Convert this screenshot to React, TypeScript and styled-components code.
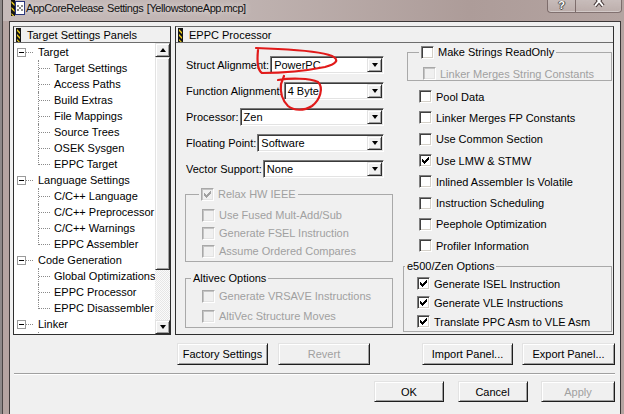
import React from 'react';
import styled, { createGlobalStyle } from 'styled-components';

const GlobalStyle = createGlobalStyle`
  html, body {
    margin: 0;
    padding: 0;
    background: #f0f0f0;
  }
  body {
    font-family: 'Liberation Sans', Arial, sans-serif;
    font-size: 11px;
    color: #000;
  }
  * {
    box-sizing: border-box;
  }
`;

const Window = styled.div`
  position: relative;
  width: 624px;
  height: 414px;
  overflow: hidden;
  display: flex;
  flex-direction: column;
  background: #b5a4a1;
  box-shadow: inset 2px 0 0 #8e8989, inset 3px 0 0 #4a4444;
`;

const TitleBar = styled.div`
  height: 21px;
  margin-left: 3px;
  display: grid;
  grid-template-columns: 8px 14px auto 1fr auto;
  align-items: start;
  background: linear-gradient(to right, #c5bab9 0%, #c1b5b3 35%, #ad9c99 75%, #b4a4a1 100%);
`;

const IconSlot = styled.div`
  grid-column: 2;
  width: 14px;
  height: 16px;
  display: flex;
`;

const Title = styled.div`
  grid-column: 3;
  margin-left: 1px;
  margin-top: 1px;
  font-size: 11px;
  letter-spacing: -0.45px;
  word-spacing: 1px;
  line-height: 15px;
  color: #111;
  text-shadow: 0 0 6px rgba(255, 255, 255, 0.8);
  white-space: nowrap;
`;

const CaptionButtons = styled.div`
  grid-column: 5;
  margin-right: 2px;
  margin-top: -1px;
  display: flex;
`;

const CaptionButton = styled.div<{ $w: number; $side: 'left' | 'right' }>`
  width: ${p => p.$w}px;
  height: 14px;
  display: flex;
  justify-content: center;
  overflow: hidden;
  border: 1px solid rgba(70, 50, 50, 0.55);
  border-top: none;
  ${p => (p.$side === 'left' ? 'border-right: none;' : '')}
  border-radius: ${p => (p.$side === 'left' ? '0 0 0 4px' : '0 0 4px 0')};
  background: linear-gradient(to bottom, rgba(255, 255, 255, 0.3), rgba(255, 255, 255, 0.12));
  box-shadow: inset 0 -1px 0 rgba(255, 255, 255, 0.35);
`;

const HelpGlyph = styled.span`
  font-family: 'Liberation Sans', Arial, sans-serif;
  font-weight: bold;
  font-size: 11px;
  line-height: 12px;
  color: #fff;
  text-shadow: 0 0 1px #333, 1px 0 0 #555, -1px 0 0 #555, 0 1px 0 #555;
`;

const Client = styled.div`
  flex: 1;
  margin: 0 3px 0 9px;
  background: #f0f0f0;
  border: 1px solid #3d3838;
  border-bottom: none;
  padding: 4px 6px 0 3px;
  display: flex;
  flex-direction: column;
`;

const Main = styled.div`
  display: flex;
  gap: 4px;
  height: 309px;
`;

const Panel = styled.div<{ $w?: number }>`
  ${p => (p.$w ? `width: ${p.$w}px;` : 'flex: 1;')}
  display: flex;
  flex-direction: column;
  border: 1px solid #2f2f2f;
  border-top-color: #6a6a6a;
`;

const PanelHeader = styled.div`
  height: 16px;
  flex: none;
  display: flex;
  align-items: center;
  gap: 6px;
  padding-left: 2px;
  border-bottom: 1px solid #6d6d6d;
  background: #f0f0f0;
  white-space: nowrap;
`;

const TreeBody = styled.div`
  flex: 1;
  display: flex;
  background: #fff;
  overflow: hidden;
`;

const TreeList = styled.div`
  flex: 1;
  padding-top: 1px;
  overflow: hidden;
`;

const TreeRow = styled.div<{ $child?: boolean; $last?: boolean }>`
  position: relative;
  height: 16px;
  line-height: 16px;
  padding-left: ${p => (p.$child ? 40 : 24)}px;
  white-space: nowrap;

  &::before {
    content: '';
    position: absolute;
    left: ${p => (p.$child ? 24 : 12)}px;
    top: ${p => (p.$child ? '0' : '8px')};
    width: ${p => (p.$child ? 0 : 7)}px;
    height: ${p => (p.$child ? (p.$last ? '9px' : '16px') : '0')};
    border-left: ${p => (p.$child ? '1px dotted #8a8a8a' : 'none')};
    border-top: ${p => (p.$child ? 'none' : '1px dotted #8a8a8a')};
  }

  &::after {
    content: '';
    display: ${p => (p.$child ? 'block' : 'none')};
    position: absolute;
    left: 25px;
    top: 8px;
    width: 11px;
    border-top: 1px dotted #8a8a8a;
  }
`;

const Expander = styled.span`
  position: absolute;
  left: 3px;
  top: 4px;
  width: 9px;
  height: 9px;
  border: 1px solid #9a9a9a;
  background: #fff;

  &::after {
    content: '';
    position: absolute;
    left: 1px;
    top: 3px;
    width: 5px;
    height: 1px;
    background: #000;
  }
`;

const ScrollBar = styled.div`
  width: 15px;
  flex: none;
  display: flex;
  flex-direction: column;
  background: repeating-conic-gradient(#fbfbfb 0 25%, #e6e6e6 0 50%) 0 0 / 2px 2px;
`;

const Raised = styled.div<{ $h?: number }>`
  ${p => (p.$h ? `height: ${p.$h}px; flex: none;` : '')}
  display: flex;
  align-items: center;
  justify-content: center;
  background: #f0f0f0;
  border: 1px solid;
  border-color: #e3e3e3 #2c2c2c #2c2c2c #e3e3e3;
  box-shadow: inset 1px 1px 0 #fff, inset -1px -1px 0 #a0a0a0;
`;

const Track = styled.div`
  flex: 1;
`;

const Arrow = styled.span<{ $dir: 'up' | 'down' }>`
  width: 0;
  height: 0;
  border-left: 3.5px solid transparent;
  border-right: 3.5px solid transparent;
  ${p =>
    p.$dir === 'up' ? 'border-bottom: 4px solid #000;' : 'border-top: 4px solid #000;'}
`;

const SettingsBody = styled.div`
  flex: 1;
  display: grid;
  grid-template-columns: 208px 209px;
  column-gap: 10px;
  padding-left: 9px;
`;

const Column = styled.div<{ $top: number }>`
  display: flex;
  flex-direction: column;
  padding-top: ${p => p.$top}px;
`;

const Fields = styled.div`
  display: flex;
  flex-direction: column;
  gap: 8px;
`;

const FieldRow = styled.div`
  display: flex;
  align-items: center;
  height: 18px;
  width: 199px;
  padding-left: 1px;
`;

const FieldLabel = styled.span`
  white-space: nowrap;
  margin-right: 1px;
`;

const Select = styled.div`
  flex: 1;
  height: 18px;
  display: flex;
  align-items: center;
  padding: 1px;
  background: #fff;
  border: 1px solid;
  border-color: #7a7a7a #fff #fff #7a7a7a;
  box-shadow: inset 1px 1px 0 #3a3a3a, inset -1px -1px 0 #e3e3e3;
`;

const SelectText = styled.span`
  flex: 1;
  padding-left: 2px;
  white-space: nowrap;
`;

const DropButton = styled(Raised)`
  width: 15px;
  height: 14px;
  flex: none;
`;

const Group = styled.fieldset<{ $mt: number; $ml?: number; $pt: number; $pb: number }>`
  margin: ${p => p.$mt}px 0 0 ${p => p.$ml ?? 0}px;
  padding: ${p => p.$pt}px 0 ${p => p.$pb}px 0;
  min-width: 0;
  border: 1px solid #a9a9a9;
`;

const Legend = styled.legend<{ $ml: number; $disabled?: boolean }>`
  margin-left: ${p => p.$ml}px;
  padding: 0 2px;
  height: 14px;
  display: flex;
  align-items: center;
  gap: 4px;
  line-height: 14px;
  color: ${p => (p.$disabled ? '#a0a0a0' : '#000')};
  white-space: nowrap;
`;

const CheckRow = styled.div<{ $h: number; $indent: number; $disabled?: boolean }>`
  height: ${p => p.$h}px;
  display: flex;
  align-items: center;
  gap: 4px;
  padding-left: ${p => p.$indent}px;
  color: ${p => (p.$disabled ? '#a0a0a0' : '#000')};
  white-space: nowrap;
`;

const Box = styled.span<{ $disabled?: boolean }>`
  width: 13px;
  height: 13px;
  flex: none;
  display: flex;
  align-items: center;
  justify-content: center;
  border: 1px solid;
  border-color: ${p => (p.$disabled ? '#a8a8a8 #fff #fff #a8a8a8' : '#808080 #fff #fff #808080')};
  box-shadow: ${p =>
    p.$disabled
      ? 'inset 1px 1px 0 #c4c4c4, inset -1px -1px 0 #e3e3e3'
      : 'inset 1px 1px 0 #404040, inset -1px -1px 0 #d4d0c8'};
  background: ${p => (p.$disabled ? '#f0f0f0' : '#fff')};
`;

const CheckList = styled.div<{ $mt: number }>`
  margin-top: ${p => p.$mt}px;
  display: flex;
  flex-direction: column;
`;

const ButtonRow = styled.div`
  margin-top: 8px;
  margin-right: -1px;
  padding-left: 164px;
  display: flex;
  gap: 10px;
`;

const Spacer = styled.div`
  flex: 1;
`;

const Separator = styled.div`
  margin: 8px -1px 0 1px;
  height: 2px;
  border-top: 1px solid #a0a0a0;
  border-bottom: 1px solid #fff;
`;

const DialogRow = styled.div`
  margin-top: 6px;
  margin-right: -1px;
  display: flex;
  justify-content: flex-end;
  gap: 13.5px;
`;

const Button = styled.button<{ $w: number; $h: number }>`
  width: ${p => p.$w}px;
  height: ${p => p.$h}px;
  padding: 0;
  font-family: 'Liberation Sans', Arial, sans-serif;
  font-size: 11px;
  color: ${p => (p.disabled ? '#a0a0a0' : '#000')};
  background: #f0f0f0;
  border: 1px solid;
  border-color: #e3e3e3 #1e1e1e #1e1e1e #e3e3e3;
  box-shadow: inset 1px 1px 0 #fff, inset -1px -1px 0 #a0a0a0;
`;

const Annotations = styled.svg`
  position: absolute;
  left: 0;
  top: 0;
  pointer-events: none;
`;

const StripeIcon = () => (
  <svg width="5" height="14" viewBox="0 0 5 14">
    <rect width="5" height="14" fill="#141414" />
    <path d="M1 1l3 3v2L1 3z M1 6l3 3v2L1 8z M1 11l3 3H2.5L1 12.5z" fill="#f2d21c" />
  </svg>
);

const CheckMark = ({ color }: { color: string }) => (
  <svg width="7" height="7" viewBox="0 0 7 7" shapeRendering="crispEdges">
    <path
      d="M6 0h1v1H6z M5 1h2v1H5z M0 2h1v1H0z M4 2h3v1H4z M0 3h2v1H0z M3 3h3v1H3z M0 4h5v1H0z M1 5h3v1H1z M2 6h1v1H2z"
      fill={color}
    />
  </svg>
);

interface CheckProps {
  checked?: boolean;
  disabled?: boolean;
}

const CheckBox: React.FC<CheckProps> = ({ checked, disabled }) => (
  <Box $disabled={disabled}>{checked && <CheckMark color={disabled ? '#a0a0a0' : '#000'} />}</Box>
);

interface OptionProps extends CheckProps {
  label: string;
  h: number;
  indent: number;
}

const Option: React.FC<OptionProps> = ({ label, h, indent, checked, disabled }) => (
  <CheckRow $h={h} $indent={indent} $disabled={disabled}>
    <CheckBox checked={checked} disabled={disabled} />
    <span>{label}</span>
  </CheckRow>
);

const Field: React.FC<{ label: string; value: string }> = ({ label, value }) => (
  <FieldRow>
    <FieldLabel>{label}</FieldLabel>
    <Select>
      <SelectText>{value}</SelectText>
      <DropButton>
        <Arrow $dir="down" />
      </DropButton>
    </Select>
  </FieldRow>
);

// the Linker node continues below the visible area; only its connector peeks in
const tree = [
  {
    label: 'Target',
    children: [
      'Target Settings',
      'Access Paths',
      'Build Extras',
      'File Mappings',
      'Source Trees',
      'OSEK Sysgen',
      'EPPC Target',
    ],
  },
  {
    label: 'Language Settings',
    children: ['C/C++ Language', 'C/C++ Preprocessor', 'C/C++ Warnings', 'EPPC Assembler'],
  },
  {
    label: 'Code Generation',
    children: ['Global Optimizations', 'EPPC Processor', 'EPPC Disassembler'],
  },
  { label: 'Linker', children: [''] },
];

const fields = [
  { label: 'Struct Alignment:', value: 'PowerPC' },
  { label: 'Function Alignment:', value: '4 Byte' },
  { label: 'Processor:', value: 'Zen' },
  { label: 'Floating Point:', value: 'Software' },
  { label: 'Vector Support:', value: 'None' },
];

const codeOptions = [
  { label: 'Pool Data' },
  { label: 'Linker Merges FP Constants' },
  { label: 'Use Common Section' },
  { label: 'Use LMW & STMW', checked: true },
  { label: 'Inlined Assembler Is Volatile' },
  { label: 'Instruction Scheduling' },
  { label: 'Peephole Optimization' },
  { label: 'Profiler Information' },
];

const App: React.FC = () => {
  return (
    <>
      <GlobalStyle />
      <Window>
        <TitleBar>
          <IconSlot>
            <svg width="14" height="16" viewBox="0 0 14 16">
              <rect x="0" y="0" width="4" height="16" fill="#141414" />
              <path d="M0.5 1l3 3v2l-3-3z M0.5 7l3 3v2l-3-3z M0.5 13l3 3H2l-1.5-1.5z" fill="#f0d020" />
              <rect x="4.5" y="1.5" width="9" height="13" fill="#fff" stroke="#26327a" />
              <rect x="6" y="5" width="2" height="2" fill="#8a8a8a" />
              <rect x="10" y="5" width="2" height="2" fill="#8a8a8a" />
              <rect x="8" y="7" width="2" height="2" fill="#8a8a8a" />
              <rect x="6" y="9" width="2" height="2" fill="#8a8a8a" />
              <rect x="10" y="9" width="2" height="2" fill="#8a8a8a" />
            </svg>
          </IconSlot>
          <Title>AppCoreRelease Settings [YellowstoneApp.mcp]</Title>
          <CaptionButtons>
            <CaptionButton $w={28} $side="left">
              <HelpGlyph>?</HelpGlyph>
            </CaptionButton>
            <CaptionButton $w={47} $side="right">
              <svg width="12" height="10" viewBox="0 0 12 10">
                <path d="M2 -3 L10 7 M10 -3 L2 7" stroke="#4a3c3c" strokeWidth="4" />
                <path d="M2 -3 L10 7 M10 -3 L2 7" stroke="#fff" strokeWidth="2" />
              </svg>
            </CaptionButton>
          </CaptionButtons>
        </TitleBar>

        <Client>
          <Main>
            <Panel $w={158}>
              <PanelHeader>
                <StripeIcon />
                <span>Target Settings Panels</span>
              </PanelHeader>
              <TreeBody>
                <TreeList>
                  {tree.map(node => (
                    <React.Fragment key={node.label}>
                      <TreeRow>
                        <Expander />
                        {node.label}
                      </TreeRow>
                      {node.children.map((child, i) => (
                        <TreeRow key={child || i} $child $last={i === node.children.length - 1}>
                          {child}
                        </TreeRow>
                      ))}
                    </React.Fragment>
                  ))}
                </TreeList>
                <ScrollBar>
                  <Raised $h={14}>
                    <Arrow $dir="up" />
                  </Raised>
                  <Raised $h={213} />
                  <Track />
                  <Raised $h={14}>
                    <Arrow $dir="down" />
                  </Raised>
                </ScrollBar>
              </TreeBody>
            </Panel>

            <Panel>
              <PanelHeader>
                <StripeIcon />
                <span>EPPC Processor</span>
              </PanelHeader>
              <SettingsBody>
                <Column $top={13}>
                  <Fields>
                    {fields.map(f => (
                      <Field key={f.label} label={f.label} value={f.value} />
                    ))}
                  </Fields>
                  <Group $mt={9} $pt={5} $pb={1}>
                    <Legend $ml={13} $disabled>
                      <CheckBox checked disabled />
                      <span>Relax HW IEEE</span>
                    </Legend>
                    <Option label="Use Fused Mult-Add/Sub" h={18} indent={16} disabled />
                    <Option label="Generate FSEL Instruction" h={18} indent={16} disabled />
                    <Option label="Assume Ordered Compares" h={18} indent={16} disabled />
                  </Group>
                  <Group $mt={9} $pt={1} $pb={1}>
                    <Legend $ml={5}>Altivec Options</Legend>
                    <Option label="Generate VRSAVE Instructions" h={20} indent={16} disabled />
                    <Option label="AltiVec Structure Moves" h={20} indent={16} disabled />
                  </Group>
                </Column>

                <Column $top={2}>
                  <Group $mt={0} $ml={4} $pt={8} $pb={0}>
                    <Legend $ml={11}>
                      <CheckBox />
                      <span>Make Strings ReadOnly</span>
                    </Legend>
                    <Option label="Linker Merges String Constants" h={13} indent={15} disabled />
                  </Group>
                  <CheckList $mt={5}>
                    {codeOptions.map(o => (
                      <Option key={o.label} label={o.label} h={21.3} indent={16} checked={o.checked} />
                    ))}
                  </CheckList>
                  <Group $mt={3} $pt={1} $pb={0}>
                    <Legend $ml={1}>e500/Zen Options</Legend>
                    <Option label="Generate ISEL Instruction" h={19} indent={13} checked />
                    <Option label="Generate VLE Instructions" h={19} indent={13} checked />
                    <Option label="Translate PPC Asm to VLE Asm" h={19} indent={13} checked />
                  </Group>
                </Column>
              </SettingsBody>
            </Panel>
          </Main>

          <ButtonRow>
            <Button $w={91} $h={22}>Factory Settings</Button>
            <Button $w={92} $h={22} disabled>
              Revert
            </Button>
            <Spacer />
            <Button $w={91} $h={22}>Import Panel...</Button>
            <Button $w={93} $h={22} style={{ marginLeft: -1 }}>
              Export Panel...
            </Button>
          </ButtonRow>
          <Separator />
          <DialogRow>
            <Button $w={70} $h={21}>OK</Button>
            <Button $w={70} $h={21}>Cancel</Button>
            <Button $w={74} $h={21} disabled>
              Apply
            </Button>
          </DialogRow>
        </Client>

        <Annotations width="624" height="414" viewBox="0 0 624 414">
          <path
            d="M256 48 L278 49 C300 50 322 52 332 56 C340 60 336 64 325 67 C305 71 280 73 262 73 C257 70 257 60 258 50"
            fill="none"
            stroke="#e11a1a"
            strokeWidth="2.2"
            strokeLinecap="round"
          />
          <path
            d="M278 80 C290 78 310 78 318 82 C324 88 320 100 312 106 C304 111 294 111 288 106 C282 100 280 92 281 84 L284 76"
            fill="none"
            stroke="#e11a1a"
            strokeWidth="2.2"
            strokeLinecap="round"
          />
        </Annotations>
      </Window>
    </>
  );
};

export default App;
